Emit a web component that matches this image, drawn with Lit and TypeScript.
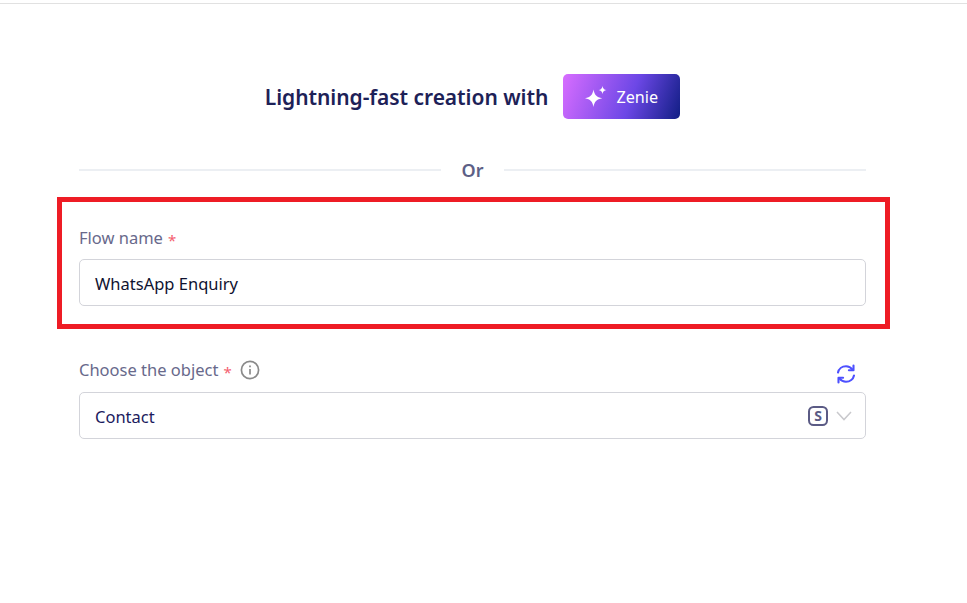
import { LitElement, html, css } from "lit";
import { customElement } from "lit/decorators.js";

@customElement("app-root")
export class AppRoot extends LitElement {
    static styles = css`
        :host {
            display: block;
            height: 603px;
            background: #fff;
            font-family: "Noto Sans", "Open Sans", sans-serif;
            overflow: hidden;
        }

        .topline {
            height: 1px;
            margin-top: 3px;
            background: #e1e1e1;
        }

        .page {
            width: 787px;
            margin-left: 79px;
            padding-top: 70px;
        }

        .hero {
            display: flex;
            align-items: center;
            justify-content: center;
            gap: 15px;
            height: 45px;
        }

        .hero-title {
            font-size: 21px;
            font-weight: 600;
            color: #1d2157;
            letter-spacing: -0.05px;
        }

        .zenie {
            display: flex;
            align-items: center;
            justify-content: center;
            gap: 7px;
            width: 117px;
            height: 45px;
            border-radius: 5px;
            background: linear-gradient(110deg, #d86dff 0%, #6c47e6 58%, #111e84 100%);
            color: #fff;
            font-size: 16.2px;
        }

        .or {
            display: flex;
            align-items: center;
            height: 24px;
            margin-top: 39px;
            color: #5d5f86;
            font-size: 18px;
            font-weight: 600;
        }

        .or::before,
        .or::after {
            content: "";
            flex: 1;
            height: 2px;
            background: #eceff3;
        }

        .or span {
            width: 63px;
            text-align: center;
        }

        .highlight {
            margin: 15px -24px 0 -22px;
            padding: 23px 19px 18px 17px;
            border: 5px solid #ee1c25;
        }

        .label {
            display: flex;
            align-items: center;
            height: 24px;
            margin-bottom: 10px;
            color: #68698b;
            font-size: 16.5px;
        }

        .req {
            margin: 6px 0 0 5px;
            color: #f4606f;
            font-size: 15px;
        }

        .info {
            margin: 2px 0 0 8px;
        }

        .control {
            display: flex;
            align-items: center;
            box-sizing: border-box;
            height: 47px;
            padding: 1px 15px 0;
            border: 1px solid #d3d4da;
            border-radius: 5px;
            background: #fff;
            font-size: 16.5px;
            color: #0f1230;
        }

        .object {
            position: relative;
            margin-top: 28px;
        }

        .object .label {
            margin-bottom: 11px;
        }

        .object .control {
            color: #1c1b5e;
        }

        .refresh {
            position: absolute;
            top: 6px;
            right: 9px;
        }

        .value {
            flex: 1;
        }

        .suffix {
            display: flex;
            align-items: center;
            gap: 8px;
            margin: -1px -2px 0 0;
        }

        .s-mark {
            font-family: "Noto Sans", sans-serif;
            font-size: 14px;
            font-weight: 700;
            fill: #5b5b85;
        }
    `;

    render() {
        return html`
            <div class="topline"></div>
            <div class="page">
                <div class="hero">
                    <div class="hero-title">Lightning-fast creation with</div>
                    <div class="zenie">
                        <svg width="24" height="24" viewBox="1 0 24 24" fill="#fff">
                            <path d="M9.5 4.5c1 5.6 3 7.7 8.7 8.8-5.7 1.1-7.7 3.2-8.7 8.7-1-5.5-3-7.6-8.6-8.7 5.6-1.1 7.6-3.2 8.6-8.8z" />
                            <path d="M18.5 1c.5 2.7 1.4 3.6 4 4.1-2.6.5-3.5 1.4-4 4-.5-2.6-1.4-3.5-4-4 2.6-.5 3.5-1.4 4-4.1z" />
                        </svg>
                        <span>Zenie</span>
                    </div>
                </div>

                <div class="or"><span>Or</span></div>

                <div class="highlight">
                    <div class="label">Flow name<span class="req">*</span></div>
                    <div class="control"><span class="value">WhatsApp Enquiry</span></div>
                </div>

                <div class="object">
                    <div class="label">
                        Choose the object<span class="req">*</span>
                        <svg class="info" width="20" height="20" viewBox="0 0 20 20" fill="none" stroke="#8a8a8a" stroke-width="1.7">
                            <circle cx="10" cy="10" r="8.6" />
                            <path d="M10 9v5.4" />
                            <path d="M10 5.4v1.8" />
                        </svg>
                    </div>
                    <svg class="refresh" width="22" height="22" viewBox="0 0 22 22" fill="none" stroke="#4d50ff" stroke-width="2.1" stroke-linecap="round" stroke-linejoin="round">
                        <path d="M3 9.5C3.8 5.8 7 3.2 11 3.2c2.8 0 4.9 1.2 6.6 3.4" />
                        <path d="M18.5 2.6v4.6h-4.6" />
                        <path d="M19 12.5c-.8 3.7-4 6.3-8 6.3-2.8 0-4.9-1.2-6.6-3.4" />
                        <path d="M3.5 19.4v-4.6h4.6" />
                    </svg>
                    <div class="control">
                        <span class="value">Contact</span>
                        <div class="suffix">
                            <svg width="20" height="20" viewBox="0 0 20 20" fill="none">
                                <rect x="1" y="1" width="18" height="18" rx="4.5" stroke="#5b5b85" stroke-width="2" />
                                <text class="s-mark" x="10" y="15" text-anchor="middle">S</text>
                            </svg>
                            <svg width="16" height="10" viewBox="0 0 16 10" fill="none" stroke="#c9c9cd" stroke-width="1.5">
                                <path d="M1 1l7 7.6L15 1" />
                            </svg>
                        </div>
                    </div>
                </div>
            </div>
        `;
    }
}
